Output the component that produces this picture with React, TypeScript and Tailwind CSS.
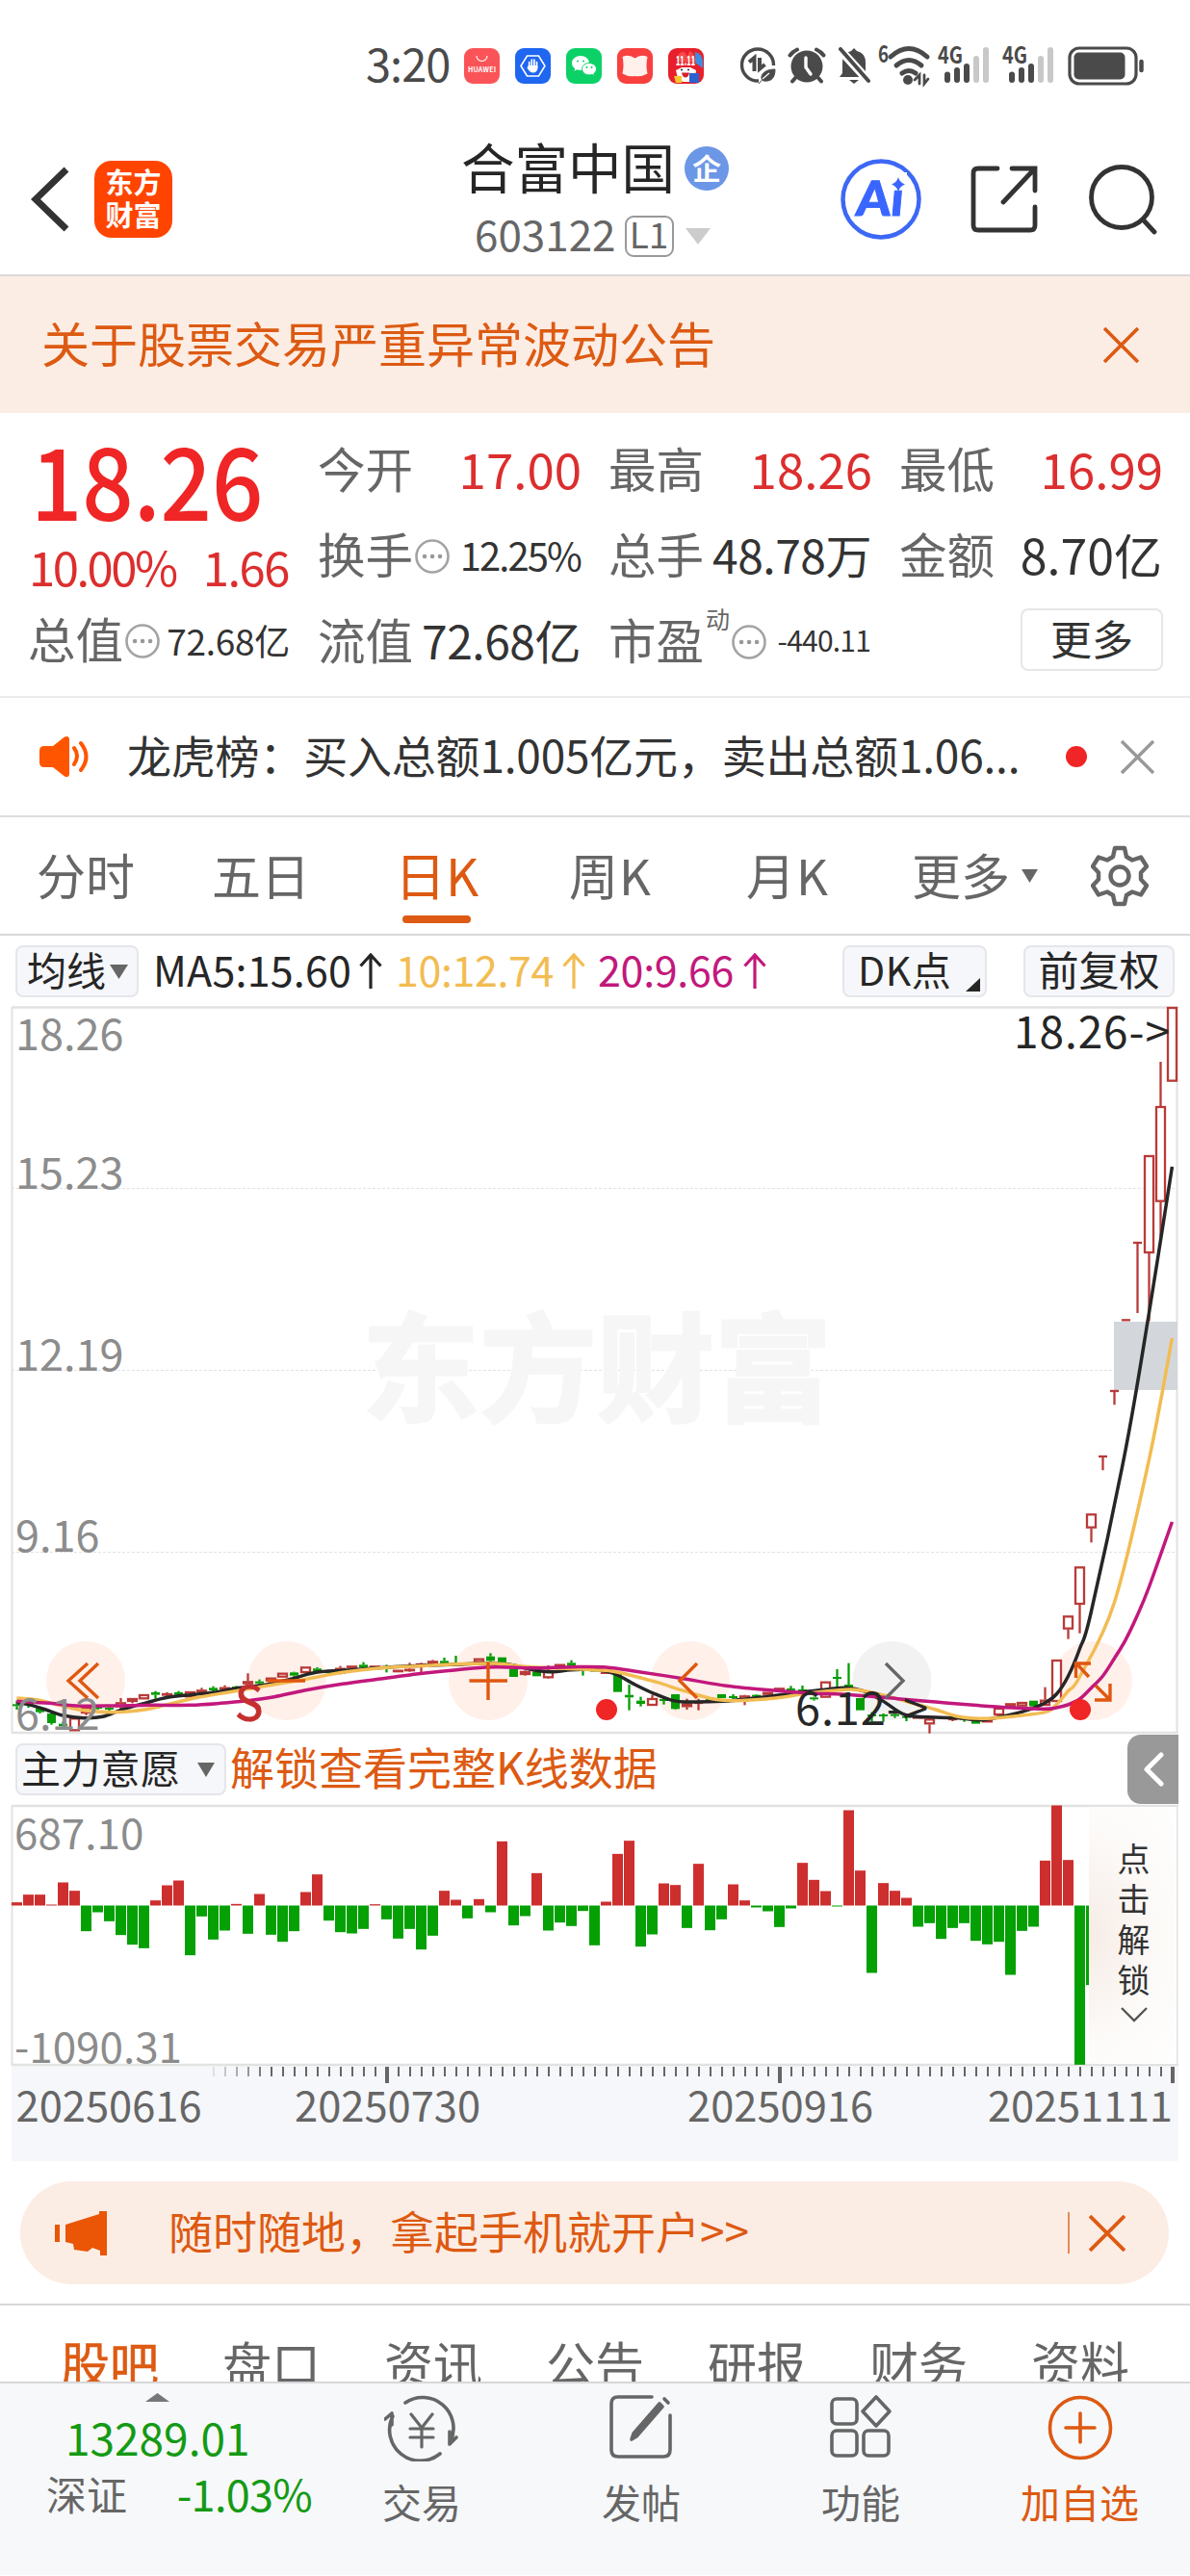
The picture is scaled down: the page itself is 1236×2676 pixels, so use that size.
import type { ReactNode } from "react";

// [color, bodyTop, bodyBottom, high, low], y in thirds of a pixel below BASE
type Candle = ["r" | "g", number, number, number, number];

const BASE = 594;
const STEP = 12;
const FIRST_X = 5.5;

const CANDLES: Candle[] = [
    ["g", 391, 397, 380, 408], ["g", 388, 394, 384, 402], ["g", 402, 416, 398, 420], ["g", 420, 450, 416, 455],
    ["g", 452, 460, 445, 468], ["r", 433, 475, 433, 475], ["r", 400, 420, 395, 425], ["g", 399, 405, 397, 408],
    ["g", 402, 408, 400, 412], ["r", 385, 400, 372, 405], ["r", 372, 384, 372, 388], ["r", 360, 376, 360, 376],
    ["g", 354, 362, 350, 374], ["r", 357, 363, 354, 368], ["g", 354, 362, 350, 366], ["r", 351, 370, 351, 370],
    ["r", 346, 353, 340, 358], ["g", 340, 348, 335, 355], ["r", 338, 345, 332, 350], ["g", 336, 342, 334, 345],
    ["r", 319, 329, 295, 334], ["g", 320, 326, 314, 335], ["r", 308, 320, 308, 320], ["r", 293, 308, 293, 308],
    ["g", 292, 302, 290, 310], ["r", 274, 294, 274, 294], ["g", 280, 288, 276, 292], ["g", 290, 294, 288, 302],
    ["r", 278, 296, 272, 298], ["r", 271, 278, 271, 278], ["g", 268, 276, 260, 284], ["r", 271, 278, 271, 278],
    ["g", 276, 282, 268, 292], ["r", 284, 290, 284, 290], ["r", 281, 287, 262, 290], ["r", 264, 272, 262, 294],
    ["r", 256, 266, 253, 268], ["g", 256, 264, 246, 270], ["g", 262, 266, 240, 272], ["r", 262, 268, 262, 268],
    ["r", 248, 262, 248, 262], ["g", 242, 256, 232, 262], ["g", 245, 262, 245, 262], ["g", 282, 306, 282, 306],
    ["r", 288, 300, 286, 302], ["g", 290, 304, 290, 304], ["r", 285, 310, 270, 312], ["r", 266, 272, 266, 272],
    ["g", 262, 270, 254, 276], ["g", 272, 278, 270, 302], ["g", 278, 290, 278, 290], ["r", 289, 295, 289, 295],
    ["g", 296, 353, 296, 353], ["g", 362, 370, 330, 410], ["g", 380, 390, 368, 398], ["r", 372, 396, 362, 396],
    ["g", 375, 381, 366, 392], ["g", 360, 406, 360, 408], ["r", 388, 400, 374, 408], ["r", 384, 388, 374, 410],
    ["g", 370, 378, 370, 378], ["g", 360, 372, 360, 372], ["g", 366, 372, 360, 378], ["r", 364, 380, 362, 394],
    ["g", 362, 368, 360, 368], ["r", 353, 362, 353, 362], ["r", 340, 348, 340, 348], ["g", 342, 348, 334, 352],
    ["g", 345, 351, 333, 356], ["g", 370, 376, 368, 380], ["r", 320, 371, 320, 371], ["g", 306, 312, 282, 340],
    ["g", 330, 340, 263, 340], ["g", 372, 410, 372, 410], ["g", 423, 429, 416, 445], ["g", 423, 429, 420, 446],
    ["g", 422, 428, 416, 434], ["g", 428, 434, 422, 444], ["r", 429, 435, 429, 435], ["r", 436, 454, 434, 482],
    ["g", 429, 435, 429, 435], ["r", 435, 440, 432, 444], ["g", 434, 440, 430, 446], ["g", 440, 452, 440, 452],
    ["r", 440, 448, 440, 448], ["r", 402, 426, 402, 426], ["r", 388, 400, 388, 400], ["r", 384, 398, 384, 398],
    ["g", 380, 398, 380, 398], ["r", 377, 396, 338, 396], ["r", 252, 384, 252, 384], ["r", 115, 158, 115, 188],
    ["r", -38, 81, -38, 170], ["r", -203, -157, -203, -113], ["r", -384, -380, -384, -338], ["r", -588, -584, -588, -542],
    ["r", -809, -805, -809, -805], ["r", -1050, -1046, -1050, -828], ["r", -1320, -1014, -1320, -803],
    ["r", -1473, -1174, -1611, -1065], ["r", -1782, -1549, -1782, -1549],
];

const MA5 = [
    44, 386, 75, 392, 120, 408, 165, 426, 220, 434, 270, 430, 320, 408, 380, 388, 440, 370, 500, 362, 560, 355,
    620, 342, 700, 330, 760, 314, 830, 292, 900, 286, 970, 280, 1050, 274, 1130, 270, 1200, 267, 1280, 263,
    1340, 268, 1400, 284, 1450, 290, 1500, 284, 1560, 282, 1592, 288, 1622, 300, 1668, 330, 1718, 358, 1768, 380,
    1808, 384, 1898, 382, 1958, 375, 2038, 364, 2118, 352, 2178, 344, 2223, 340, 2268, 350, 2318, 380, 2378, 424,
    2458, 432, 2518, 434, 2578, 440, 2638, 428, 2698, 410, 2745, 387, 2775, 360, 2805, 306, 2836, 219, 2866, 105,
    2957, -404, 3018, -826, 3079, -1284,
];
const MA10 = [
    44, 372, 100, 378, 160, 395, 220, 410, 300, 416, 380, 408, 440, 392, 520, 370, 600, 354, 700, 334, 800, 314,
    900, 292, 1000, 278, 1100, 272, 1200, 266, 1300, 264, 1380, 274, 1450, 278, 1558, 284, 1618, 290, 1718, 320,
    1798, 350, 1878, 376, 1938, 380, 2038, 372, 2118, 358, 2198, 348, 2248, 346, 2318, 362, 2388, 385, 2458, 408,
    2518, 430, 2578, 436, 2638, 432, 2745, 416, 2775, 392, 2805, 351, 2836, 306, 2927, 75, 3018, -369, 3079, -750,
];
const MA20 = [
    44, 382, 130, 388, 200, 396, 300, 396, 400, 394, 500, 394, 580, 388, 650, 380, 720, 368, 800, 348, 900, 328,
    1000, 312, 1100, 296, 1200, 284, 1300, 275, 1400, 278, 1500, 275, 1592, 276, 1678, 290, 1798, 312, 1908, 334,
    2008, 346, 2118, 356, 2238, 362, 2358, 374, 2458, 384, 2558, 394, 2658, 402, 2745, 406, 2775, 402, 2805, 393,
    2836, 375, 2866, 341, 2897, 303, 2927, 249, 2957, 190, 2985, 121, 3018, 27, 3079, -177,
];

const INTENT = [
    10, 34, 34, 3, 72, 46, -80, -21, -49, -92, -122, -133, 16, 63, 78, -155, -34, -106, -78, 5, -88, 36, -91, -113,
    -80, 42, 97, -47, -83, -87, -73, 4, -43, -103, -73, -137, -94, 46, 18, -40, 20, -21, 200, -62, -33, 101, -78,
    -53, -64, -17, -124, 12, 161, 202, -128, -90, 69, 64, -70, 130, -77, -43, 66, 16, -6, -18, -67, -9, 133, 80,
    45, -3, 297, 109, -210, 70, 46, 24, -66, -55, -104, -70, -55, -110, -121, -113, -216, -79, -66, 140, 312, 142,
    -496, -248,
];

function smooth(flat: number[]) {
    const p: [number, number][] = [];
    for (let i = 0; i < flat.length; i += 2) p.push([flat[i] * 0.3954 - 12, BASE + flat[i + 1] / 3]);
    let d = `M${p[0][0]} ${p[0][1]}`;
    for (let i = 0; i < p.length - 1; i++) {
        const a = p[Math.max(i - 1, 0)], b = p[i], c = p[i + 1], e = p[Math.min(i + 2, p.length - 1)];
        d += `C${b[0] + (c[0] - a[0]) / 6} ${b[1] + (c[1] - a[1]) / 6} ${c[0] - (e[0] - b[0]) / 6} ${c[1] - (e[1] - b[1]) / 6} ${c[0]} ${c[1]}`;
    }
    return d;
}

function Cross({ size, className }: { size: number; className: string }) {
    return (
        <svg width={size} height={size} viewBox="0 0 36 36" className={className} fill="none" stroke="currentColor" strokeWidth="3.6">
            <path d="M1 1 35 35M35 1 1 35" />
        </svg>
    );
}

function Signal() {
    return (
        <svg width="54" height="40" viewBox="0 0 54 40" className="shrink-0 overflow-visible">
            <text x="0" y="18" fontSize="24" fontWeight="700" fill="#4a4a4a" textLength="26" lengthAdjust="spacingAndGlyphs">4G</text>
            <g strokeWidth="6" strokeLinecap="round">
                <path stroke="#4a4a4a" d="M10 29.500V35M20 25V35M30 21V35" />
                <path stroke="#c8c8c8" d="M40 13V35M50 4V35" />
            </g>
        </svg>
    );
}

function StatusBar() {
    return (
        <div className="flex h-[136px] shrink-0 items-center pl-[380px] text-[#4a4a4a]">
            <span className="w-[102px] pb-1.5 text-[47px] leading-[70px] tracking-[-1px]">3:20</span>
            <svg width="37" height="37" viewBox="0 0 37 37" className="shrink-0 overflow-visible">
                <rect width="37" height="37" rx="9" fill="#fb5458" />
                <path d="M13 8a5.500 5.500 0 0 0 11 0" fill="none" stroke="#fff" strokeWidth="1.200" />
                <text x="4" y="24.500" fontSize="7" fontWeight="700" fill="#fff" textLength="29">HUAWEI</text>
            </svg>
            <svg width="37" height="37" viewBox="0 0 37 37" className="ml-4 shrink-0">
                <rect width="37" height="37" rx="9" fill="#1f66f0" />
                <path d="M12.500 8h12l6.500 10.500-6.500 10.500h-12L6 18.500z" fill="none" stroke="#fff" strokeWidth="1.600" />
                <path d="M14.700 20v-5.500M17.300 19v-7M19.900 19v-7M22.500 20v-5.500" stroke="#fff" strokeWidth="1.700" strokeLinecap="round" />
                <path d="M13.800 18h9.600v3.500q-1 4-4.600 4t-6.300-5z" fill="#fff" />
            </svg>
            <svg width="37" height="37" viewBox="0 0 37 37" className="ml-4 shrink-0">
                <rect width="37" height="37" rx="9" fill="#0bd167" />
                <path d="M15 8c-5 0-9 3.300-9 7.500 0 2.300 1.200 4.300 3.200 5.700l-.8 2.600 3-1.500c1.100.4 2.300.6 3.600.6 5 0 9-3.200 9-7.400S20 8 15 8z" fill="#fff" />
                <path d="M24 15.500c-4.200 0-7.500 2.800-7.500 6.200s3.300 6.200 7.500 6.200c1 0 2-.2 2.900-.5l2.500 1.300-.6-2.200c1.700-1.200 2.700-2.900 2.700-4.800 0-3.400-3.300-6.200-7.500-6.200z" fill="#fff" stroke="#0bd167" />
                <path d="M12 13.500v.1M18 13.500v.1M21.500 20v.1M26.500 20v.1" stroke="#0bd167" strokeWidth="2" strokeLinecap="round" />
            </svg>
            <svg width="37" height="37" viewBox="0 0 37 37" className="ml-4 shrink-0">
                <rect width="37" height="37" rx="9" fill="#f8403f" />
                <path d="M5.500 9q7-3 13 1.500Q24.500 6 31.500 9q-2 9 0 17.500-6 3.500-13 2.500Q11.500 30 5.500 26.500q2-9 0-17.500z" fill="#fff0ec" />
            </svg>
            <svg width="37" height="37" viewBox="0 0 37 37" className="ml-4 shrink-0 overflow-visible">
                <rect width="37" height="37" rx="9" fill="#e8202c" />
                <path d="M28 4q7 2 8 9v8l-8-6z" fill="#3d8de0" />
                <path d="M9 14q1-12 8-10l3 5 2-6q6 2 6 12z" fill="#f7494a" />
                <text x="8" y="18" fontSize="13" fontWeight="900" fill="#fff" textLength="20" lengthAdjust="spacingAndGlyphs">11.11</text>
                <path d="M8 23l6-3h9l6 3-1 8-5 4h-8l-5-4z" fill="#fff" />
                <path d="M14 25.500h8q-1 5-4 5t-4-5z" fill="#d7202c" />
                <path d="M14 22.500v.1M21 22.500v.1" stroke="#222" strokeWidth="2" strokeLinecap="round" />
                <path d="M22 26h10v10H22z" fill="#2b62cf" />
                <path d="M6 29h8v7H8z" fill="#f7c531" />
            </svg>
            {/* data saver */}
            <svg width="38" height="38" viewBox="0 0 38 38" className="ml-[37px] shrink-0" fill="none" stroke="#4a4a4a" strokeWidth="3.400">
                <path d="M20 35A16.500 16.500 0 1 1 35.500 19" />
                <path d="M10 15.500 15.500 11V25M21 11V22.500L26.500 18" strokeWidth="4" />
                <path d="M23 33c-1-6 5-10 14-10 0 9-4 13-12 12zM20 38l8-9" fill="#4a4a4a" strokeWidth="1" />
                <path d="M24 33l7-6" stroke="#fff" strokeWidth="1.200" />
            </svg>
            {/* alarm */}
            <svg width="40" height="38" viewBox="0 0 40 38" className="ml-3 shrink-0" fill="none" stroke="#4a4a4a" strokeWidth="4" strokeLinecap="round">
                <circle cx="20" cy="20" r="16.500" fill="#4a4a4a" stroke="none" />
                <path d="M2.500 8.500q3-4 7.500-6M37.500 8.500q-3-4-7.500-6M8 32l-3 3.500M32 32l3 3.500" />
                <path d="M19 11v10l5 7" stroke="#fff" strokeWidth="3.400" />
            </svg>
            {/* muted bell */}
            <svg width="34" height="38" viewBox="0 0 34 38" className="ml-3 shrink-0">
                <path d="M5 27V16q0-10 9-12l3-3 3 3q9 2 9 12v11l3 4H2z" fill="#4a4a4a" />
                <path d="M12 34h10l-5 4z" fill="#4a4a4a" />
                <path d="M1 1 33 36" stroke="#fff" strokeWidth="9" />
                <path d="M3 2 32 35" stroke="#4a4a4a" strokeWidth="4" strokeLinecap="round" />
            </svg>
            {/* wifi 6 */}
            <svg width="54" height="42" viewBox="0 0 54 42" className="ml-2 shrink-0 overflow-visible" fill="none" stroke="#4a4a4a" strokeWidth="5" strokeLinecap="round">
                <text x="0" y="18" fontSize="24" fontWeight="700" fill="#4a4a4a" stroke="none" textLength="11" lengthAdjust="spacingAndGlyphs">6</text>
                <path d="M13 12q19-17 38 0M19 21q13-11 26 0M25 29q7-5 14 0" />
                <circle cx="31" cy="36" r="5" fill="#4a4a4a" stroke="none" />
                <path d="M38 36l5-5v9M48 31v9l4-5" strokeWidth="2.800" />
            </svg>
            <div className="ml-2 flex gap-[13px]">
                <Signal />
                <Signal />
            </div>
            <svg width="80" height="41" viewBox="0 0 80 41" className="ml-3.5 shrink-0">
                <rect x="2" y="2" width="69" height="37" rx="10" fill="none" stroke="#4a4a4a" strokeWidth="3.200" />
                <rect x="6.500" y="6.500" width="53" height="28" rx="5" fill="#4a4a4a" />
                <path d="M76.500 16v9" stroke="#4a4a4a" strokeWidth="4.500" strokeLinecap="round" />
            </svg>
        </div>
    );
}

function Header() {
    return (
        <div className="flex h-[151px] shrink-0 border-b-2 border-[#d9d9d9]">
            <div className="flex h-[142px] w-[479px] items-center pl-8">
                <svg width="40" height="68" viewBox="0 0 40 68" fill="none" stroke="#333" strokeWidth="7">
                    <path d="M37 3 5 34 37 65" />
                </svg>
                <div className="ml-[26px] flex h-20 w-[81px] flex-col items-center justify-center rounded-[18px] bg-[#ff4400] pb-1 text-[29px] font-bold leading-[34px] text-white">
                    <span>东方</span>
                    <span>财富</span>
                </div>
            </div>
            <div className="flex w-[394px] flex-col">
                <div className="mt-2 flex h-[62px] items-center">
                    <span className="pb-1.5 text-[55.500px] leading-[62px] text-[#262626]">合富中国</span>
                    <span className="ml-2.5 flex size-[46px] items-center justify-center rounded-full bg-[#6c96e6] pb-1 text-[30px] font-bold leading-[40px] text-white">企</span>
                </div>
                <div className="mt-2 flex h-[62px] items-center pl-3.5 text-[#666]">
                    <span className="pb-1.5 text-[44px] leading-[60px]">603122</span>
                    <span className="ml-[9px] flex h-[43px] w-[51px] items-center justify-center rounded-[9px] border-2 border-[#999] pb-1.5 text-[37px] leading-[40px]">L1</span>
                    <svg width="26" height="17" className="ml-3"><path d="M0 0h26L13 17z" fill="#ccc" /></svg>
                </div>
            </div>
            <div className="flex h-[142px] items-center">
                <svg width="84" height="84" viewBox="0 0 84 84">
                    <circle cx="42" cy="42" r="39.500" fill="#fff" stroke="#3d68f5" strokeWidth="4.500" />
                    <g transform="translate(5.500 0) skewX(-5)">
                        <text x="15" y="59" fontSize="50" fontWeight="900" fill="#3a66ff" stroke="#3a66ff" strokeWidth="1" className="font-['Lato',sans-serif]" textLength="49" lengthAdjust="spacingAndGlyphs">Ai</text>
                    </g>
                    <path d="M49 14h20v18H49z" fill="#fff" />
                    <path d="M60 19q1.500 5.500 7 7.500-5.500 2-7 7.500-1.500-5.500-7-7.500 5.500-2 7-7.500z" fill="#3a66ff" />
                </svg>
                <svg width="70" height="70" viewBox="0 0 70 70" className="ml-[51px]" fill="none" stroke="#333" strokeWidth="4.800" strokeLinecap="round">
                    <path d="M28 3H8Q3 3 3 8V62Q3 67 8 67H62Q67 67 67 62V43M43 3H67V26M66 4 34 38" />
                </svg>
                <svg width="74" height="74" viewBox="0 0 74 74" className="ml-[53px]" fill="none" stroke="#333" strokeWidth="4.800" strokeLinecap="round">
                    <circle cx="34" cy="35" r="31.500" />
                    <path d="M56 58 68 71" />
                </svg>
            </div>
        </div>
    );
}

function Info() {
    return (
        <svg width="36" height="36" viewBox="0 0 36 36" className="ml-0.5 shrink-0">
            <circle cx="18" cy="18" r="16.500" fill="none" stroke="#a3a3a3" strokeWidth="2.600" />
            <path d="M10 18h.1M18 18h.1M26 18h.1" stroke="#999" strokeWidth="4.500" strokeLinecap="round" />
        </svg>
    );
}

function Cell({ label, extra, children, valueClass }: { label: string; extra?: ReactNode; children: ReactNode; valueClass: string }) {
    return (
        <div className="flex h-[89px] items-center">
            <span className="-ml-px pb-1.5 text-[49.500px] leading-[70px] text-[#666]">{label}</span>
            {extra}
            <span className={`ml-auto leading-[70px] whitespace-nowrap ${valueClass}`}>{children}</span>
        </div>
    );
}

function Quote() {
    const red = "pb-1.5 text-[51px] text-[#dc2e2e] mr-[-2px]";
    const big = "pb-1.5 text-[48px] tracking-[-0.5px] text-[#333] mr-[-1px]";
    return (
        <div className="flex h-[296px] shrink-0 border-b-2 border-[#ebebeb] pt-[15px] pl-[30px]">
            <div className="mr-[31px] w-[270px]">
                <div className="flex h-[117px] items-center pb-3.5 pl-0.5">
                    <span className="origin-left scale-x-[0.9] text-[104px] font-medium leading-[103px] text-[#f02525]">18.26</span>
                </div>
                <div className="flex h-[60px] items-center justify-between pb-1.5 text-[49px] leading-[54px] tracking-[-2.500px] text-[#dc2e2e]">
                    <span>10.00%</span>
                    <span className="tracking-[-1.500px]">1.66</span>
                </div>
                <Cell label="总值" extra={<Info />} valueClass="pb-0.5 text-[37px] text-[#333] tracking-[-0.300px] mr-[-1px]">72.68亿</Cell>
            </div>
            <div className="grid h-[267px] w-[874px] grid-cols-[271px_271px_271px] gap-x-[31px]">
                <Cell label="今开" valueClass={red}>17.00</Cell>
                <Cell label="最高" valueClass={red}>18.26</Cell>
                <Cell label="最低" valueClass={red}>16.99</Cell>
                <Cell label="换手" extra={<Info />} valueClass="pb-1 text-[40px] tracking-[-1.900px] text-[#333] mr-[-1px]">12.25%</Cell>
                <Cell label="总手" valueClass={big}>48.78万</Cell>
                <Cell label="金额" valueClass="pb-1.5 text-[50px] tracking-[0px] text-[#333] mr-[-1px]">8.70亿</Cell>
                <Cell label="流值" valueClass={big}>72.68亿</Cell>
                <Cell
                    label="市盈"
                    extra={<><span className="mb-[50px] ml-0.5 text-[25px] leading-[30px] text-[#666]">动</span><Info /></>}
                    valueClass="pb-1.5 text-[30px] tracking-[-0.800px] text-[#333]"
                >
                    -440.11
                </Cell>
                <div className="-mr-0.5 flex h-[89px] items-center justify-end pb-1">
                    <span className="flex h-[65px] w-[148px] items-center justify-center rounded-lg border-2 border-[#e6e6e6] pb-1.5 text-[43px] leading-[56px] text-[#333]">更多</span>
                </div>
            </div>
        </div>
    );
}

function News() {
    return (
        <div className="flex h-[124px] shrink-0 items-center border-b-2 border-[#dedede] pl-10">
            <svg width="54" height="44" viewBox="0 0 54 44">
                <path d="M6 11h9L27 1.500q5-2 5 3v35q0 5-5 3L15 33H6q-5 0-5-5V16q0-5 5-5z" fill="#ff5500" />
                <path d="M37 13q6 8 0 17M44 8q11 14 0 28" fill="none" stroke="#ff5500" strokeWidth="4" strokeLinecap="round" />
            </svg>
            <span className="ml-[38px] w-[941px] pb-[7px] text-[46px] leading-[66px] tracking-[-0.200px] whitespace-nowrap text-[#333]">龙虎榜：买入总额1.005亿元，卖出总额1.06...</span>
            <span className="ml-[34px] size-[22px] rounded-full bg-[#f02525]" />
            <Cross size={35} className="ml-[35px] text-[#999]" />
        </div>
    );
}

function PeriodTabs() {
    const tab = "shrink-0 pb-1 text-[51px] leading-[70px] text-[#666]";
    return (
        <div className="flex h-[123px] shrink-0 items-center border-b-2 border-[#d9d9d9] pl-[38px]">
            <span className={`${tab} w-[182px]`}>分时</span>
            <span className={`${tab} w-[190px]`}>五日</span>
            <span className="relative w-[181px] shrink-0 pb-1 text-[53px] leading-[70px] text-[#dd5a12]">
                日K
                <span className="absolute top-[78px] left-2 h-[8px] w-[71px] rounded-full bg-[#dd5a12]" />
            </span>
            <span className={`${tab} w-[184px] tracking-[1px]`}>周K</span>
            <span className={`${tab} w-[172px] tracking-[1px]`}>月K</span>
            <span className={`${tab} w-[114px]`}>更多</span>
            <svg width="17" height="14" className="shrink-0"><path d="M0 0h17L8.500 14z" fill="#666" /></svg>
            <svg width="60" height="64" viewBox="0 0 60 64" className="ml-[55px] shrink-0" fill="none" stroke="#666" strokeWidth="4.400" strokeLinejoin="round">
                <path d="M25 3h10l2 9 6 3.500 9-3 6 9.500-6 6.500v7l6 6.500-6 9.500-9-3-6 3.500-2 9H25l-2-9-6-3.500-9 3L2 42l6-6.500v-7L2 22l6-9.500 9 3 6-3.500z" />
                <circle cx="30" cy="32" r="9.500" />
            </svg>
        </div>
    );
}

function Chip({ className, children }: { className: string; children: ReactNode }) {
    return (
        <div className={`relative flex h-[54px] shrink-0 items-center rounded-lg border-2 border-[#e4e6ea] bg-[#f6f7fa] text-[41px] leading-[50px] text-[#262626] ${className}`}>
            {children}
        </div>
    );
}

function UpArrow() {
    return (
        <svg width="24" height="38" viewBox="0 0 24 38" className="ml-auto inline-block" fill="none" stroke="currentColor" strokeWidth="3.200">
            <path d="M12 37V2M1.500 13.500 12 2l10.500 11.500" />
        </svg>
    );
}

function Averages() {
    const avg = "flex items-center text-[43px] leading-[62px]";
    return (
        <div className="flex h-[74px] shrink-0 items-center pl-4">
            <Chip className="w-[128px] pl-2.5">
                <span className="pb-1.5">均线</span>
                <svg width="19" height="15" className="ml-1"><path d="M0 0h19L9.500 15z" fill="#666" /></svg>
            </Chip>
            <span className={`${avg} ml-[15px] w-[238px] text-[#262626]`}><span className="pb-1.5 tracking-[0.200px]">MA5:15.60</span><UpArrow /></span>
            <span className={`${avg} ml-[14px] w-[197px] text-[#f2bc52]`}><span className="pb-1.5 tracking-[-0.400px]">10:12.74</span><UpArrow /></span>
            <span className={`${avg} ml-[13px] w-[175px] text-[#c2187c]`}><span className="pb-1.5 tracking-[-0.300px]">20:9.66</span><UpArrow /></span>
            <Chip className="ml-[79px] w-[150px] pl-3.5">
                <span className="pb-1.5 tracking-[0.500px]">DK点</span>
                <svg width="15" height="14" className="absolute right-[5px] bottom-1"><path d="M15 0v14H0z" fill="#262626" /></svg>
            </Chip>
            <Chip className="ml-[38px] w-[157px] justify-center"><span className="pb-1.5 text-[42px]">前复权</span></Chip>
        </div>
    );
}

function KLine() {
    const rings = [77, 286, 495, 705, 1123];
    return (
        <svg width="1212" height="756" viewBox="0 0 1212 756" className="ml-3 block shrink-0 overflow-visible">
            <path d="M.500 0V754M1210.500 0V754" stroke="#e2e2e2" strokeWidth="2" />
            <path d="M0 .500H1212M0 754H1212" stroke="#e2e2e2" strokeWidth="2.500" />
            <path d="M0 188.500H1210M0 377.500H1210M0 566.500H1210" stroke="#e2e2e2" strokeDasharray="3 2" />
            <text x="364" y="421" fontSize="122" fontWeight="700" fill="#f6f6f6" stroke="#f6f6f6" strokeWidth="3">东方财富</text>
            {rings.map((x) => <circle key={x} cx={x} cy="700" r="41" fill="#fff0e9" />)}
            <circle cx="914.500" cy="700" r="41" fill="#f2f2f2" />
            <rect x="1145" y="327" width="66" height="71" fill="#d3d7dc" />

            {CANDLES.map(([c, top, bottom, hi, lo], i) => {
                const x = FIRST_X + i * STEP;
                const y1 = BASE + top / 3, y2 = BASE + bottom / 3;
                const color = c === "r" ? "#b93a38" : "#069c06";
                const h = Math.max(y2 - y1, 1.500);
                return (
                    <g key={i} stroke={color} strokeWidth="2.300">
                        {hi < top && <path d={`M${x} ${BASE + hi / 3}V${y1}`} />}
                        {lo > bottom && <path d={`M${x} ${y2}V${BASE + lo / 3}`} />}
                        {c === "g"
                            ? <rect x={x - 4.500} y={y1} width="9" height={h} fill={color} stroke="none" />
                            : h < 2
                                ? <path d={`M${x - 4.500} ${y1 + 1}H${x + 4.500}`} />
                                : <rect x={x - 4.500} y={y1 + 1} width="9" height={Math.max(h - 2, 0.500)} fill="#fff" />}
                    </g>
                );
            })}

            <g fill="none" strokeWidth="3.500" strokeLinejoin="round">
                <path d={smooth(MA5)} stroke="#262626" />
                <path d={smooth(MA10)} stroke="#f2bc52" />
                <path d={smooth(MA20)} stroke="#c2187c" />
            </g>

            <g fontSize="45" fill="#8c8c8c">
                <text x="4" y="45">18.26</text>
                <text x="4" y="189">15.23</text>
                <text x="4" y="378">12.19</text>
                <text x="4" y="566">9.16</text>
                <text x="4" y="751">6.12</text>
            </g>
            <text x="1041" y="43" fontSize="46" fill="#262626" textLength="162">18.26-&gt;</text>
            <text x="814" y="746" fontSize="47" fill="#262626" textLength="138">6.12-&gt;</text>
            <text x="232" y="741" fontSize="49" fill="#c4302e" stroke="#c4302e" strokeWidth="1">S</text>

            <g fill="none" stroke="#e0570f" strokeWidth="3.400">
                <path d="M79 682 59 700 79 718M90 682 71 700 90 718" />
                <path d="M266 700H305M475.500 700H515M495 681V720" />
                <path d="M712 682 694 700 712 718" />
                <path d="M908 682 926 700 908 718" stroke="#666" />
                <path d="M1121 682H1105.500V697M1106 682 1119 696M1125 720H1141V703M1141 720 1126 705" />
            </g>
            <circle cx="618" cy="730" r="11" fill="#f02525" />
            <circle cx="1110" cy="730" r="11" fill="#f02525" />
        </svg>
    );
}

function IndicatorRow() {
    return (
        <div className="flex h-[73px] shrink-0 items-center pb-px pl-4">
            <Chip className="w-[219px] pl-1">
                <span className="pb-1.5 tracking-[0.300px]">主力意愿</span>
                <svg width="18" height="15" className="ml-[18px]"><path d="M0 0h18L9 15z" fill="#666" /></svg>
            </Chip>
            <span className="ml-1 pb-2 text-[46px] leading-[66px] text-[#dd5a12]">解锁查看完整K线数据</span>
            <div className="mr-3 ml-auto flex h-[72px] w-[53px] items-center justify-center rounded-l-[14px] bg-[#999]">
                <svg width="22" height="38" viewBox="0 0 22 38" fill="none" stroke="#fff" strokeWidth="5" strokeLinecap="round" strokeLinejoin="round">
                    <path d="M19 4 4 19 19 34" />
                </svg>
            </div>
        </div>
    );
}

function IntentChart() {
    return (
        <div className="relative ml-3 h-[271px] w-[1212px] shrink-0">
            <svg width="1212" height="271" viewBox="0 0 1212 271" className="block overflow-visible">
                <path d="M.500 0V271M1210.500 0V271" stroke="#e2e2e2" strokeWidth="2" />
                <path d="M0 1H1212M0 270H1212" stroke="#e2e2e2" strokeWidth="2.500" />
                {INTENT.map((v, i) => (
                    <rect
                        key={i}
                        x={Math.max(FIRST_X + i * STEP - 5.500, 0)}
                        y={v > 0 ? 104.500 - v / 3 : 104.500}
                        width="11"
                        height={Math.abs(v) / 3}
                        fill={v > 0 ? "#cd2f2e" : "#04a004"}
                    />
                ))}
                <g fontSize="44" fill="#8c8c8c">
                    <text x="3" y="46">687.10</text>
                    <text x="3" y="268">-1090.31</text>
                </g>
            </svg>
            <div className="absolute top-0.5 right-0.5 flex h-[267px] w-[91px] flex-col items-center bg-[radial-gradient(ellipse_at_left,#f6ece6_0%,#fdfbf9_60%,#fefefe_100%)] pt-8 pl-0.5 text-[34px] leading-[42px] text-[#333]">
                {["点", "击", "解", "锁"].map((c) => <span key={c}>{c}</span>)}
                <svg width="28" height="16" viewBox="0 0 28 16" className="mt-2" fill="none" stroke="#555" strokeWidth="2.400"><path d="M1 1 14 14 27 1" /></svg>
            </div>
        </div>
    );
}

function TimeAxis() {
    const ticks = Array.from({ length: 84 }, (_, k) => k + 17);
    return (
        <svg width="1212" height="99" viewBox="0 0 1212 99" className="ml-3 block shrink-0 bg-[#f6f7fa]">
            {ticks.map((i) => {
                const major = i === 32 || i === 66 || i === 100;
                return (
                    <path
                        key={i}
                        d={`M${6 + i * STEP} 1V${major ? 18 : 11}`}
                        stroke="#666"
                        strokeWidth={major ? 4 : 2}
                        opacity={Math.min(1, (i - 16) / 6)}
                    />
                );
            })}
            <g fontSize="43.500" fill="#666">
                <text x="4.500" y="58">20250616</text>
                <text x="294" y="58">20250730</text>
                <text x="702" y="58">20250916</text>
                <text x="1014" y="58" textLength="192">20251111</text>
            </g>
        </svg>
    );
}

function OpenAccount() {
    return (
        <div className="mx-[21px] mt-[21px] flex h-[107px] w-[1193px] shrink-0 items-center rounded-full bg-[#fcede4] text-[#dd5a12]">
            <svg width="54" height="46" viewBox="0 0 54 46" className="ml-9" fill="#ea5506">
                <path d="M0 14h5v18H0zM11 14 46 3V0h8v46h-7v-5l-8-3-5 4-14-2-1-6-8-2z" />
            </svg>
            <span className="ml-[64px] pb-2 text-[46px] leading-[66px]">随时随地，拿起手机就开户&gt;&gt;</span>
            <span className="ml-auto h-[43px] w-0.5 bg-[#e58a5a]" />
            <Cross size={38} className="mr-[45px] ml-5" />
        </div>
    );
}

function SectionTabs() {
    return (
        <div className="mt-5 flex h-[81px] shrink-0 gap-[66px] overflow-hidden border-t-2 border-[#d9d9d9] pt-[30px] pl-[63px] text-[51px] leading-[58px] text-[#666]">
            {["股吧", "盘口", "资讯", "公告", "研报", "财务", "资料"].map((t) => (
                <span key={t} className={`shrink-0 ${t === "股吧" ? "text-[#dd5a12] [-webkit-text-stroke:0.6px_#dd5a12]" : ""}`}>{t}</span>
            ))}
        </div>
    );
}

function NavItem({ label, className, children }: { label: string; className: string; children: ReactNode }) {
    return (
        <div className={`flex shrink-0 flex-col items-center text-[41px] leading-[51px] ${className}`}>
            <svg width="78" height="70" viewBox="0 0 78 70" className="mt-px" fill="none" stroke="currentColor" strokeWidth="3.600" strokeLinecap="round" strokeLinejoin="round">
                {children}
            </svg>
            <span className="mt-4">{label}</span>
        </div>
    );
}

function BottomNav() {
    return (
        <div className="flex h-[201px] shrink-0 border-t-2 border-[#d5d7d9] bg-[#f6f8fa] pt-2.5 text-[#666]">
            <div className="flex w-[324px] flex-col">
                <svg width="25" height="9" className="ml-[151px]"><path d="M0 9 12.500 0 25 9z" fill="#777" /></svg>
                <span className="mt-[5px] ml-[68px] text-[46px] leading-[62px] text-[#149a14]">13289.01</span>
                <div className="mt-[3px] flex items-center pl-12 leading-[50px]">
                    <span className="text-[42px]">深证</span>
                    <span className="ml-auto text-[45px] tracking-[-0.700px] text-[#149a14]">-1.03%</span>
                </div>
            </div>
            <NavItem label="交易" className="w-[228px]">
                <path d="M22 9a32 32 0 0 1 47 40l-1 3M68 39v13l7-7M58 62A32 32 0 0 1 9 23M1 26l7-6v12" />
                <path d="M28 21l11 14 11-14M39 35v20M27 36h24M27 45h24" strokeWidth="3.200" />
            </NavItem>
            <NavItem label="发帖" className="w-[228px]">
                <path d="M50 3H15Q8 3 8 10V58Q8 65 15 65H62Q69 65 69 58V22" />
                <path d="M61 13 34 44l-5 3 2-6L58 10zM63 5l4 4" fill="currentColor" />
            </NavItem>
            <NavItem label="功能" className="w-[228px]">
                <rect x="9" y="5" width="26" height="26" rx="5" />
                <rect x="9" y="38" width="26" height="26" rx="5" />
                <rect x="42" y="38" width="26" height="26" rx="5" />
                <path d="M55 3 69 18 55 33 41 18z" />
            </NavItem>
            <NavItem label="加自选" className="w-[227px] text-[#dd5a12]">
                <circle cx="39" cy="35" r="31.500" />
                <path d="M39 20V50M24 35H54" />
            </NavItem>
        </div>
    );
}

export default function App() {
    return (
        <div className="flex h-[2676px] w-[1236px] flex-col overflow-hidden bg-white font-['Noto_Sans_CJK_SC',sans-serif]">
            <StatusBar />
            <Header />
            <div className="flex h-[142px] shrink-0 items-center justify-between bg-[#fcede4] pr-[53px] pl-[43px] text-[#dd5a12]">
                <span className="pb-1.5 text-[50px] leading-[72px]">关于股票交易严重异常波动公告</span>
                <Cross size={37} className="" />
            </div>
            <Quote />
            <News />
            <PeriodTabs />
            <Averages />
            <KLine />
            <IndicatorRow />
            <IntentChart />
            <TimeAxis />
            <OpenAccount />
            <SectionTabs />
            <BottomNav />
        </div>
    );
}
